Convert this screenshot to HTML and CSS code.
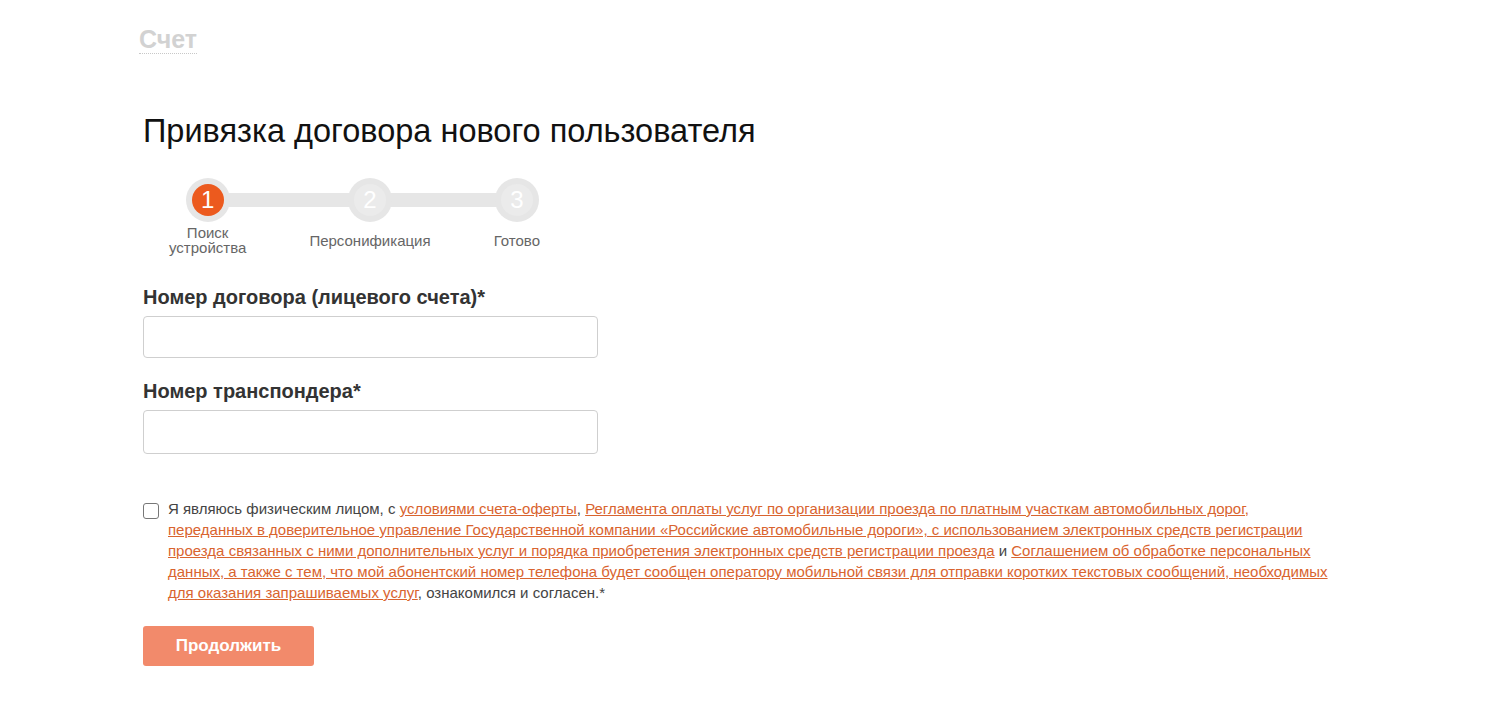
FILE: index.html
```html
<!DOCTYPE html>
<html lang="ru">
<head>
    <meta charset="UTF-8">
    <title>Привязка договора</title>
    <link rel="stylesheet" href="styles.css">
</head>
<body>
    <div class="page">
        <div class="tabs">
            <span class="tab">Счет</span>
        </div>

        <h1 class="title">Привязка договора нового пользователя</h1>

        <div class="steps">
            <div class="steps-line"></div>
            <div class="step active">
                <div class="step-circle"><span>1</span></div>
                <div class="step-label">Поиск<br>устройства</div>
            </div>
            <div class="step">
                <div class="step-circle"><span>2</span></div>
                <div class="step-label">Персонификация</div>
            </div>
            <div class="step">
                <div class="step-circle"><span>3</span></div>
                <div class="step-label">Готово</div>
            </div>
        </div>

        <form class="form">
            <label class="field">
                <span class="field-label">Номер договора (лицевого счета)*</span>
                <input class="field-input" type="text">
            </label>
            <label class="field">
                <span class="field-label">Номер транспондера*</span>
                <input class="field-input tall" type="text">
            </label>

            <div class="agree">
                <span class="checkbox"></span>
                <p class="agree-text">Я являюсь физическим лицом, с <a href="#">условиями счета-оферты</a>, <a href="#">Регламента оплаты услуг по организации проезда по платным участкам автомобильных дорог, переданных в доверительное управление Государственной компании «Российские автомобильные дороги», с использованием электронных средств регистрации проезда связанных с ними дополнительных услуг и порядка приобретения электронных средств регистрации проезда</a> и <a href="#">Соглашением об обработке персональных данных, а также с тем, что мой абонентский номер телефона будет сообщен оператору мобильной связи для отправки коротких текстовых сообщений, необходимых для оказания запрашиваемых услуг</a>, ознакомился и согласен.*</p>
            </div>

            <button class="submit" type="button">Продолжить</button>
        </form>
    </div>
</body>
</html>
```

FILE: styles.css
```css
body {
    margin: 0;
    background: #fff;
    font-family: "Liberation Sans", Arial, sans-serif;
    color: #333;
}
.page {
    width: 1200px;
    margin: 0 auto;
    padding-top: 26px;
}
.tabs {
    margin-left: -4px;
    height: 30px;
}
.tab {
    font-size: 25px;
    font-weight: bold;
    color: #d2d2d2;
    border-bottom: 1px dotted #c8c8c8;
    line-height: 26px;
    display: inline-block;
    padding-bottom: 1px;
}
.title {
    margin: 56px 0 0;
    font-size: 32.5px;
    font-weight: normal;
    color: #111;
    line-height: 38px;
}
.steps {
    position: relative;
    display: flex;
    justify-content: space-between;
    width: 371px;
    margin-top: 28px;
    margin-left: 26px;
}
.steps-line {
    position: absolute;
    left: 39px;
    right: 24px;
    top: 15px;
    height: 14px;
    background: #e6e6e6;
}
.step {
    position: relative;
    display: flex;
    flex-direction: column;
    align-items: center;
}
.step-circle {
    width: 44px;
    height: 44px;
    border-radius: 50%;
    background: #e6e6e6;
    display: flex;
    align-items: center;
    justify-content: center;
}
.step-circle span {
    width: 32px;
    height: 32px;
    border-radius: 50%;
    display: flex;
    align-items: center;
    justify-content: center;
    font-size: 24px;
    color: #fff;
    background: #ebebeb;
}
.step.active .step-circle span {
    background: #ec5a1e;
}
.step-label {
    height: 36px;
    display: flex;
    align-items: center;
    font-size: 15px;
    line-height: 15px;
    color: #666;
    text-align: center;
}
.form {
    margin-top: 28px;
}
.field {
    display: block;
    margin-bottom: 22px;
}
.field-label {
    display: block;
    font-size: 20px;
    font-weight: bold;
    color: #333;
    line-height: 22px;
    margin-bottom: 8px;
}
.field-input {
    display: block;
    box-sizing: border-box;
    width: 455px;
    height: 42px;
    border: 1px solid #cfcfcf;
    border-radius: 4px;
    padding: 0 10px;
    font-size: 16px;
    font-family: inherit;
}
.field-input.tall {
    height: 44px;
}
.agree {
    display: flex;
    align-items: flex-start;
    gap: 9px;
    margin-top: 44px;
}
.checkbox {
    flex: none;
    width: 14px;
    height: 14px;
    border: 1px solid #777;
    border-radius: 3px;
    margin-top: 5px;
}
.agree-text {
    margin: 0;
    width: 1166px;
    font-size: 15px;
    line-height: 21px;
    color: #444;
}
.agree-text a {
    color: #d9642f;
    text-decoration: underline;
}
.submit {
    margin-top: 23px;
    width: 171px;
    height: 40px;
    border: none;
    border-radius: 3px;
    background: #f28a6b;
    color: #fff;
    font-family: inherit;
    font-size: 17px;
    font-weight: bold;
    cursor: pointer;
}
```
